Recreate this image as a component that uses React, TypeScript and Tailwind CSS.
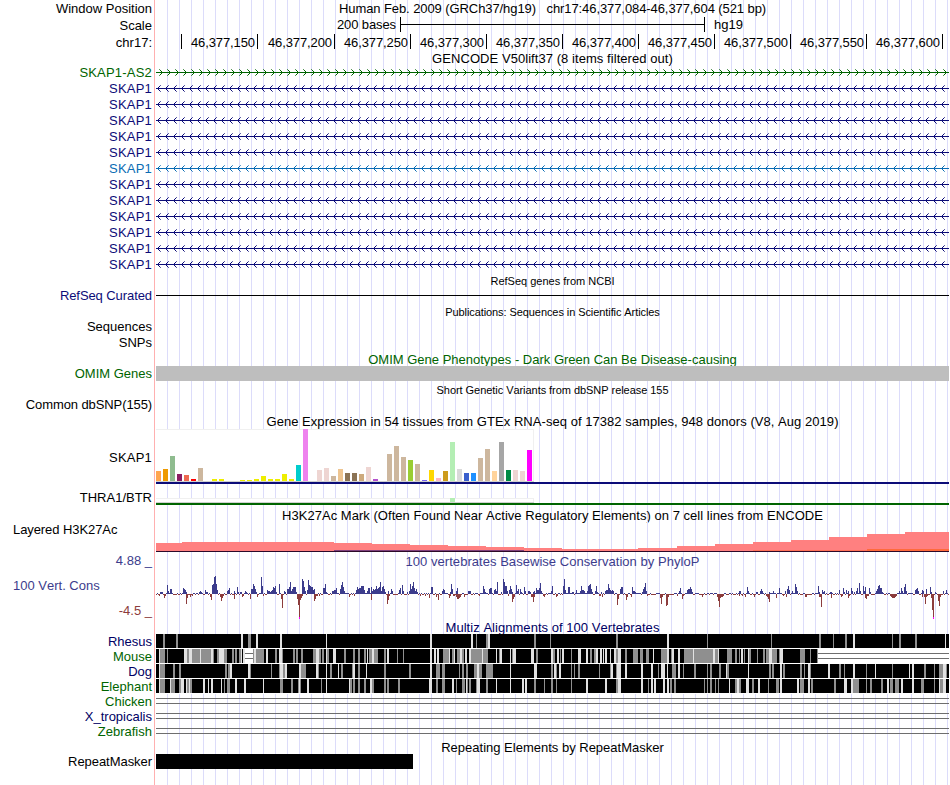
import type { ReactNode } from 'react';
import { clsx } from 'clsx';

const TRACK_W = 793;

// Ruler ticks: label (left of the tick) and the column's class
const RULER: [string, string][] = [
  ['', 'w-[26px]'],
  ['46,377,150', 'w-[76px]'],
  ['46,377,200', 'w-[77px]'],
  ['46,377,250', 'w-[76px]'],
  ['46,377,300', 'w-[76px]'],
  ['46,377,350', 'w-[76px]'],
  ['46,377,400', 'w-[76px]'],
  ['46,377,450', 'w-[76px]'],
  ['46,377,500', 'w-[76px]'],
  ['46,377,550', 'w-[76px]'],
  ['46,377,600', 'w-[76px]'],
];

const GENES = [
  { name: 'SKAP1-AS2', color: '#006400', text: 'text-[#006400]', forward: true },
  ...Array.from({ length: 12 }, (_, i) =>
    i === 5
      ? { name: 'SKAP1', color: '#0a6cb4', text: 'text-[#0a6cb4]', forward: false }
      : { name: 'SKAP1', color: '#0c0c78', text: 'text-[#0c0c78]', forward: false },
  ),
];

// GTEx tissues in order: [bar height, colour]
const TISSUES: [number, string][] = [
  [10, '#ffa54f'], [12, '#ee9a00'], [25, '#8fbc8f'], [7, '#8b1c62'], [6, '#ee6a50'], [2, '#ff0000'],
  [13, '#cdb79e'], [0, '#eeee00'], [2, '#eeee00'], [2, '#eeee00'], [0, '#eeee00'], [0, '#eeee00'],
  [1, '#eeee00'], [1, '#eeee00'], [2, '#eeee00'], [5, '#eeee00'], [2, '#eeee00'], [2, '#eeee00'],
  [7, '#eeee00'], [2, '#eeee00'], [16, '#00cdcd'], [52, '#ee82ee'], [0, '#9ac0cd'], [11, '#eed5d2'],
  [13, '#eed5d2'], [5, '#cdb79e'], [12, '#eec591'], [8, '#8b7355'], [8, '#8b7355'], [7, '#cdaa7d'],
  [14, '#eed5d2'], [2, '#b452cd'], [0, '#7a378b'], [27, '#cdb79e'], [35, '#cdb79e'], [24, '#cdb79e'],
  [21, '#9acd32'], [17, '#cdb79e'], [1, '#7a67ee'], [11, '#ffd700'], [3, '#ffb6c1'], [10, '#cd9b1d'],
  [39, '#b4eeb4'], [12, '#d9d9d9'], [8, '#3a5fcd'], [8, '#1e90ff'], [23, '#cdb79e'], [32, '#cdb79e'],
  [10, '#ffd39b'], [39, '#a6a6a6'], [11, '#008b45'], [11, '#eed5d2'], [10, '#eed5d2'], [31, '#ff00ff'],
];

// H3K27Ac signal: [start, height] of each step
const H3K27AC = [
  [0, 8], [26, 9], [178, 8], [216, 7], [254, 6], [292, 5], [330, 4], [368, 3], [406, 2],
  [482, 3], [521, 5], [559, 7], [597, 9], [635, 11], [673, 14], [711, 17], [749, 19],
];

// PhyloP peaks as "position:height"
const PEAKS =
  '4:2 5:2 6:2 11:9 12:3 14:5 15:5 26:1 27:6 28:5 29:4 30:2 43:2 44:3 45:2 49:4 50:2 51:2 56:9 57:10 58:17 59:18 60:10 61:4 ' +
  '71:3 72:4 73:6 78:3 81:7 82:2 84:2 85:2 89:3 90:2 95:5 96:5 97:10 98:8 99:5 100:2 105:17 106:8 111:4 112:3 113:3 114:2 115:3 116:4 117:7 118:6 119:8 120:2 123:10 ' +
  '128:3 129:2 131:5 132:5 133:7 134:12 135:3 136:5 137:7 138:7 139:7 140:2 146:15 147:13 148:7 149:3 151:4 152:14 153:9 154:8 155:7 156:7 157:4 158:5 ' +
  '167:6 168:6 169:10 170:2 176:3 177:3 178:4 179:4 180:6 184:5 185:9 186:12 187:7 188:3 200:4 201:7 202:5 203:6 204:6 205:8 206:8 207:8 208:4 211:3 212:6 213:6 215:7 216:3 217:5 218:4 219:5 220:8 221:5 222:6 223:7 224:12 225:3 226:7 227:8 228:5 229:2 232:3 235:5 236:3 ' +
  '243:4 244:6 246:9 247:3 251:2 253:3 254:10 255:5 256:8 257:12 258:6 259:3 260:5 261:2 275:7 276:7 286:3 287:5 288:4 294:2 295:10 296:5 300:3 301:6 312:3 313:3 314:3 327:8 328:5 329:2 333:5 334:6 335:6 338:4 339:5 340:3 341:12 345:2 347:15 348:12 349:8 350:8 351:3 353:4 354:8 355:5 356:2 360:9 361:3 362:5 364:5 365:2 368:7 369:3 372:3 373:3 374:2 377:2 378:3 380:6 381:4 382:4 383:6 384:11 385:3 ' +
  '395:3 396:8 407:8 408:15 409:4 412:7 413:7 416:2 417:2 420:4 424:3 425:8 426:4 427:4 428:3 431:3 432:8 433:9 434:10 435:5 436:2 439:3 440:8 441:2 445:2 449:3 450:4 451:4 452:10 453:6 454:4 455:3 456:4 457:3 464:5 465:7 466:7 476:7 477:3 478:3 479:2 486:2 487:5 488:7 489:11 490:3 ' +
  '523:3 524:6 531:4 532:5 533:5 534:7 535:5 536:2 583:3 584:3 591:7 592:3 600:2 601:2 604:3 605:5 606:3 613:2 617:3 623:6 629:3 631:5 632:8 633:4 636:3 639:10 640:7 641:3 662:8 663:2 666:4 667:2 668:3 674:2 675:2 683:4 687:6 688:2 690:4 692:3 695:6 696:3 698:2 700:3 701:6 703:11 704:3 707:8 708:3 709:7 713:6 714:2 ' +
  '720:3 721:5 722:8 723:9 724:6 725:6 726:2 743:3 745:6 746:3 748:7 749:10 750:3 759:4 760:5 761:6 762:3 766:4 767:3 770:5 774:7 775:2 779:2 787:3 790:4';

const DIPS =
  '8:4 30:10 31:4 34:3 36:2 54:3 55:6 64:3 65:7 66:4 67:2 78:5 86:3 87:2 94:5 101:3 125:5 126:14 141:5 142:11 143:24 144:6 145:4 146:2 158:7 159:5 160:2 ' +
  '193:3 198:2 215:6 231:10 232:6 233:2 269:2 273:4 280:3 282:6 293:4 294:2 300:3 301:5 302:5 303:4 304:3 308:3 356:8 357:5 358:3 375:3 376:3 377:8 378:3 388:3 400:3 401:2 446:3 461:11 462:5 470:6 471:3 475:3 ' +
  '504:4 505:10 506:3 510:12 511:11 512:3 521:2 526:5 527:2 546:3 561:3 562:7 563:13 564:4 565:3 566:3 583:2 589:3 598:3 610:2 611:3 612:5 613:8 620:4 630:3 649:3 650:3 663:3 664:3 665:13 675:4 685:3 686:2 692:4 693:2 709:4 710:5 711:2 734:2 735:3 736:4 737:4 738:4 739:3 740:2 766:3 768:3 769:10 770:3 775:4 776:16 777:24 782:7 783:12 784:3';

// Alignment stripes over black: start, shade (g = grey, l = light), width
const ALIGNMENTS = [
  {
    name: 'Rhesus',
    text: 'text-[#000064]',
    stripes:
      '7g2 20g2 85l2 92g3 100l2 124l2 170l1 274l2 315l2 320g1 330g2 332l2 378g2 394g1 460g2 511l2 551g1 615g1 663g2 677g1 689g2 697l2 736g1 743g2 759g2 789l1',
    gaps: [],
  },
  {
    name: 'Mouse',
    text: 'text-[#006400]',
    stripes:
      '3l1 4g5 11g1 28l3 31g2 33l3 36g8 44l1 45g10 55l2 57g1 61g2 63l5 68g3 76g2 79g2 83g2 85l1 87l2 97g1 98l2 100g8 110l2 119g2 123l3 126g1 137g2 140g2 145g2 157g3 160l3 163g2 166g2 170l1 171g2 177l3 188g2 197g2 202g2 208g2 211l1 213g1 214g2 216l2 218g4 228g2 231l2 241g1 247g1 ' +
      '274l2 278l2 281l2 287g6 293l1 296g2 298l1 301g3 304l2 306g2 309l2 313l2 315g11 326l1 327g5 340l1 343g1 344l2 354l1 356g1 357l3 375l3 380g2 395l2 397g2 401l2 404g1 406l2 415g1 422l3 430l2 434g2 438g2 440l2 444l2 447l1 449l2 454l1 458l2 460g2 462l3 469g2 477g5 484g3 490g3 497l1 505g6 511l2 515g1 516l2 522l2 528g6 ' +
      '534g3 537l1 538g19 557l2 559g3 562l1 571g5 579g2 583g1 585l2 588g1 592l1 593g2 601g1 607g2 610g3 613l3 616g5 623g1 624l3 644g5 654g1 661g1',
    gaps: [[89, 8], [662, 131]],
  },
  {
    name: 'Dog',
    text: 'text-[#000064]',
    stripes:
      '3l1 4g5 17g2 23g2 69g2 72g2 74l2 92l2 94g1 115g1 123g1 124l3 127g2 129l2 143l2 145g5 160l2 162g1 170l1 174g2 182l1 185g2 196g1 197l2 202g2 210l1 228g2 253g2 ' +
      '274l2 280g4 286g3 303g1 306g2 310g2 318g3 321l2 323g3 330g7 354l1 378l3 395g2 398l2 400g1 403l2 415g1 418g1 422g2 443g1 454g1 455l2 460g1 461l4 469l2 485l2 495l2 502g1 505l4 511l1 516g4 522l2 527g1 ' +
      '538g2 551g1 554g2 563g2 570l1 571g2 592l1 613g2 616g2 624l2 627g2 644g2 648g1 652l2 654g1 672l2 683g2 688g1 697l2 710g1 719l1 736g1 753l1 756l2 768g2 778g1 783g4 787l3 790g1',
    gaps: [],
  },
  {
    name: 'Elephant',
    text: 'text-[#006400]',
    stripes:
      '3l1 4g5 14l1 15g4 23g2 25l3 30l1 31g2 33l1 34g2 47l2 52l1 55l2 65l1 68g1 71g3 79l2 88l2 107l1 124g3 135g2 142g1 143l1 144g1 151l2 165g1 170l1 193l1 194g2 197g2 202g2 208g2 214l2 216g2 228g2 231g2 242g2 ' +
      '273l3 280g2 286g3 296l2 300g1 306g3 310l1 311g1 313g2 320g1 321l3 330g2 340l1 354l1 366l2 369l2 378g2 388g1 395g2 400g1 415g1 430l2 449l2 460g2 462l3 485l2 492g1 495l2 498l2 507l2 511l2 514g2 518g2 ' +
      '548g1 551g1 554g2 559g1 562g1 573l1 579g2 581l2 583g2 590l3 596g2 602l2 612g1 620g3 624l2 641l2 644g4 652l2 655g2 678g2 688l3 695l2 697g6 710g1 714g2 725g2 731l2 734g3 739g4 745l2 756l2 765g3 778g1 783l1 784g3 787l3',
    gaps: [],
  },
];

const UNALIGNED = [
  ['Chicken', 'text-[#006400]'],
  ['X_tropicalis', 'text-[#000064]'],
  ['Zebrafish', 'text-[#006400]'],
];

function parsePeaks(s: string) {
  return new Map(s.split(' ').map((p) => p.split(':').map(Number) as [number, number]));
}

// One signed value per pixel; positions without a peak get low background signal
function conservation() {
  const up = parsePeaks(PEAKS);
  const down = parsePeaks(DIPS);
  let seed = 7;
  return Array.from({ length: TRACK_W }, (_, x) => {
    seed = (seed * 1103515245 + 12345) % 2147483648;
    const noise = seed / 2147483648;
    const rise = up.get(x) ?? 0;
    const fall = down.get(x) ?? 0;
    if (rise || fall) return { x, rise, fall };
    return noise < 0.45 ? { x, rise: 1, fall: 0 } : { x, rise: 0, fall: noise > 0.93 ? 2 : 1 };
  });
}

const CONSERVATION = conservation();

/** Left label cell plus the gridded track area. */
function Row({
  height,
  label,
  labelClass = 'pr-[2px] text-right',
  children,
}: {
  height: string;
  label?: ReactNode;
  labelClass?: string;
  children?: ReactNode;
}) {
  return (
    <div className={clsx('flex shrink-0', height)}>
      <div className={clsx('w-[154px] shrink-0 whitespace-pre', labelClass)}>{label}</div>
      <div className="w-[795px] shrink-0 border-l border-[#ffb0b0] pl-px">
        <div className="h-full w-[793px] bg-[repeating-linear-gradient(90deg,transparent_0_11px,#dcdcfa_11px_12px)]">
          {children}
        </div>
      </div>
    </div>
  );
}

function Title({ className, children }: { className: string; children: ReactNode }) {
  return <div className={clsx('text-center whitespace-pre', className)}>{children}</div>;
}

function Canvas({ height, children }: { height: number; children: ReactNode }) {
  return (
    <svg className="block overflow-visible" width={TRACK_W} height={height} shapeRendering="crispEdges">
      {children}
    </svg>
  );
}

// Pixels of every arrow head that sit d rows away from the line
function arrowPixels(forward: boolean, d: number) {
  return Array.from({ length: 99 }, (_, i) => {
    const x = i * 8 + (forward ? 6 - d : 1 + d);
    return `M${x} ${8 - d}h1v1h-1z M${x} ${8 + d}h1v1h-1z`;
  }).join('');
}

function GeneLine({ color, forward }: { color: string; forward: boolean }) {
  return (
    <Canvas height={16}>
      <rect x="0" y="8" width={TRACK_W} height="1" fill={color} />
      <path d={arrowPixels(forward, 1)} fill={color} />
      <path d={arrowPixels(forward, 2)} fill={color} />
      <path d={arrowPixels(forward, 3)} fill={color} opacity="0.65" />
    </Canvas>
  );
}

function DoubleLine({ x = 0, width = TRACK_W }: { x?: number; width?: number }) {
  return (
    <>
      <rect x={x} y="4" width={width} height="1" fill="#6e6e6e" />
      <rect x={x} y="9" width={width} height="1" fill="#6e6e6e" />
    </>
  );
}

function AlignmentStripes({ stripes, gaps }: { stripes: string; gaps: number[][] }) {
  return (
    <Canvas height={15}>
      <rect width={TRACK_W} height="15" fill="#fff" />
      <rect width={TRACK_W} height="14" fill="#000" />
      {stripes.split(' ').map((s) => {
        const [, x, shade, w] = s.match(/(\d+)([gl])(\d+)/)!;
        return <rect key={s} x={x} width={w} height="14" fill={shade === 'g' ? '#8f8f8f' : '#e1e1e1'} />;
      })}
      {gaps.map(([x, w]) => (
        <g key={x}>
          <rect x={x} width={w} height="14" fill="#fff" />
          <DoubleLine x={x} width={w} />
        </g>
      ))}
    </Canvas>
  );
}

export default function App() {
  return (
    <main className="flex h-[785px] w-[950px] flex-col overflow-hidden bg-white font-['Liberation_Sans',Arial,sans-serif] text-[13px] text-black [font-kerning:none]">
      <Row height="h-[17px]" label="Window Position" labelClass="pr-[2px] text-right leading-[17px]">
        <Title className="leading-[17px] tracking-[-0.085px]">
          {'Human Feb. 2009 (GRCh37/hg19)   chr17:46,377,084-46,377,604 (521 bp)'}
        </Title>
      </Row>
      <Row height="h-[17px]" label="Scale" labelClass="pr-[2px] text-right leading-[17px]">
        <div className="flex h-[15px] leading-[16px]">
          <div className="w-[244px] pr-[4px] text-right tracking-[-0.1px]">200 bases</div>
          <div className="flex w-[305px] items-center border-x border-black">
            <div className="h-px w-full bg-black" />
          </div>
          <div className="pl-[9px]">hg19</div>
        </div>
      </Row>
      <Row height="h-[17px]" label="chr17:" labelClass="pr-[2px] text-right leading-[18px]">
        <div className="flex h-[15px] leading-[18px]">
          {RULER.map(([text, width]) => (
            <div
              key={width + text}
              className={clsx('shrink-0 border-r border-black pr-[2px] text-right tracking-[-0.1px]', width)}
            >
              {text}
            </div>
          ))}
        </div>
      </Row>
      <Row height="h-[13px]">
        <Title className="leading-[16px] tracking-[0.06px]">GENCODE V50lift37 (8 items filtered out)</Title>
      </Row>
      {GENES.map((gene, i) => (
        <Row
          key={i}
          height="h-[16px]"
          label={gene.name}
          labelClass={clsx('pr-[2px] text-right leading-[17px] tracking-[0.2px]', gene.text)}
        >
          <GeneLine color={gene.color} forward={gene.forward} />
        </Row>
      ))}

      <Row height="h-[16px]">
        <Title className="text-[11px] leading-[18px]">RefSeq genes from NCBI</Title>
      </Row>
      <Row
        height="h-[16px]"
        label="RefSeq Curated"
        labelClass="pr-[2px] text-right leading-[16px] tracking-[-0.08px] text-[#0c0c78]"
      >
        <Canvas height={16}>
          <rect y="7" width={TRACK_W} height="1" fill="#000" />
        </Canvas>
      </Row>
      <Row height="h-[15px]">
        <Title className="text-[11px] leading-[16px] tracking-[-0.08px]">
          Publications: Sequences in Scientific Articles
        </Title>
      </Row>
      <Row height="h-[16px]" label="Sequences" labelClass="pr-[2px] text-right leading-[16px]" />
      <Row height="h-[16px]" label="SNPs" labelClass="pr-[2px] text-right leading-[16px]" />
      <Row height="h-[15px]">
        <Title className="leading-[18px] text-[#006400]">OMIM Gene Phenotypes - Dark Green Can Be Disease-causing</Title>
      </Row>
      <Row height="h-[15px]" label="OMIM Genes" labelClass="pr-[2px] text-right leading-[16px] text-[#006400]">
        <div className="relative h-full bg-[#bebebe]" />
      </Row>
      <Row height="h-[16px]">
        <Title className="text-[11px] leading-[19px] tracking-[-0.05px]">
          Short Genetic Variants from dbSNP release 155
        </Title>
      </Row>
      <Row
        height="h-[16px]"
        label="Common dbSNP(155)"
        labelClass="pr-[2px] text-right leading-[16px] tracking-[-0.1px]"
      />

      <Row height="h-[16px]">
        <Title className="leading-[18px] tracking-[0.045px]">
          Gene Expression in 54 tissues from GTEx RNA-seq of 17382 samples, 948 donors (V8, Aug 2019)
        </Title>
      </Row>
      <Row height="h-[55px]" label="SKAP1" labelClass="pr-[2px] text-right leading-[57px] tracking-[0.2px]">
        <Canvas height={55}>
          <rect width="378" height="53" fill="#f0f0f0" />
          <rect y="1" width="377" height="51" fill="#fff" />
          <rect y="52" width="378" height="1" fill="#d0d0d0" />
          {TISSUES.map(([h, color], i) => (
            <rect key={i} x={i * 7} y={52 - h} width="5" height={h} fill={color} />
          ))}
          <rect y="53" width={TRACK_W} height="2" fill="#0c0c78" />
        </Canvas>
      </Row>
      <Row height="h-[21px]" label="THRA1/BTR" labelClass="pr-[2px] text-right leading-[27px]">
        <Canvas height={21}>
          <rect y="14" width="378" height="4" fill="#f0f0f0" />
          <rect y="15" width="377" height="3" fill="#fff" />
          <rect y="18" width="378" height="1" fill="#d0d0d0" />
          <rect x="294" y="14" width="5" height="4" fill="#b4eeb4" />
          <rect y="19" width={TRACK_W} height="2" fill="#006400" />
        </Canvas>
      </Row>

      <Row height="h-[16px]">
        <Title className="leading-[22px] tracking-[0.03px]">
          H3K27Ac Mark (Often Found Near Active Regulatory Elements) on 7 cell lines from ENCODE
        </Title>
      </Row>
      <Row height="h-[31px]" label="Layered H3K27Ac" labelClass="pl-[13px] leading-[18px] tracking-[-0.08px]">
        <Canvas height={31}>
          {H3K27AC.map(([x, h], i) => (
            <rect key={x} x={x} y={30 - h} width={(H3K27AC[i + 1]?.[0] ?? TRACK_W) - x} height={h} fill="#ff8080" />
          ))}
          <rect x="178" y="29" width="190" height="1" fill="#80407c" />
          <rect x="597" y="29" width="114" height="1" fill="#ff7058" />
          <rect x="711" y="28" width="82" height="2" fill="#ff6a3c" />
          <rect y="30" width={TRACK_W} height="1" fill="#2c0a28" />
        </Canvas>
      </Row>

      <Row height="h-[17px]" label="4.88 _" labelClass="pr-[2px] text-right leading-[18px] text-[#3c3c8c]">
        <Title className="leading-[20px] tracking-[0.04px] text-[#3c3c8c]">
          100 vertebrates Basewise Conservation by PhyloP
        </Title>
      </Row>
      <Row
        height="h-[51px]"
        labelClass="flex flex-col"
        label={
          <>
            <span className="h-[33px] pl-[13px] leading-[34px] text-[#3c3c8c]">100 Vert. Cons</span>
            <span className="pr-[2px] text-right leading-[17px] text-[#8c3c3c]">-4.5 _</span>
          </>
        }
      >
        <Canvas height={51}>
          {CONSERVATION.map(({ x, rise, fall }) => (
            <g key={x}>
              {rise > 0 && <rect x={x} y={25 - rise} width="1" height={rise} fill="#3c3c8c" />}
              <rect x={x} y="25" width="1" height={Math.max(fall, rise ? 0 : 1)} fill="#8c3c3c" />
              {fall > 20 && <rect x={x} y="48" width="1" height="2" fill="#ff00ff" />}
            </g>
          ))}
        </Canvas>
      </Row>

      <Row height="h-[14px]">
        <Title className="leading-[16px] tracking-[0.04px] text-[#000064]">Multiz Alignments of 100 Vertebrates</Title>
      </Row>
      {ALIGNMENTS.map(({ name, text, stripes, gaps }) => (
        <Row key={name} height="h-[15px]" label={name} labelClass={clsx('pr-[2px] text-right leading-[16px]', text)}>
          <AlignmentStripes stripes={stripes} gaps={gaps} />
        </Row>
      ))}
      {UNALIGNED.map(([name, text]) => (
        <Row key={name} height="h-[15px]" label={name} labelClass={clsx('pr-[2px] text-right leading-[16px]', text)}>
          <Canvas height={15}>
            <DoubleLine />
          </Canvas>
        </Row>
      ))}

      <Row height="h-[15px]">
        <Title className="leading-[18px]">Repeating Elements by RepeatMasker</Title>
      </Row>
      <Row height="h-[15px]" label="RepeatMasker" labelClass="pr-[2px] text-right leading-[16px] tracking-[-0.05px]">
        <div className="h-full w-[257px] bg-black" />
      </Row>
      <Row height="h-[16px]" />
    </main>
  );
}
